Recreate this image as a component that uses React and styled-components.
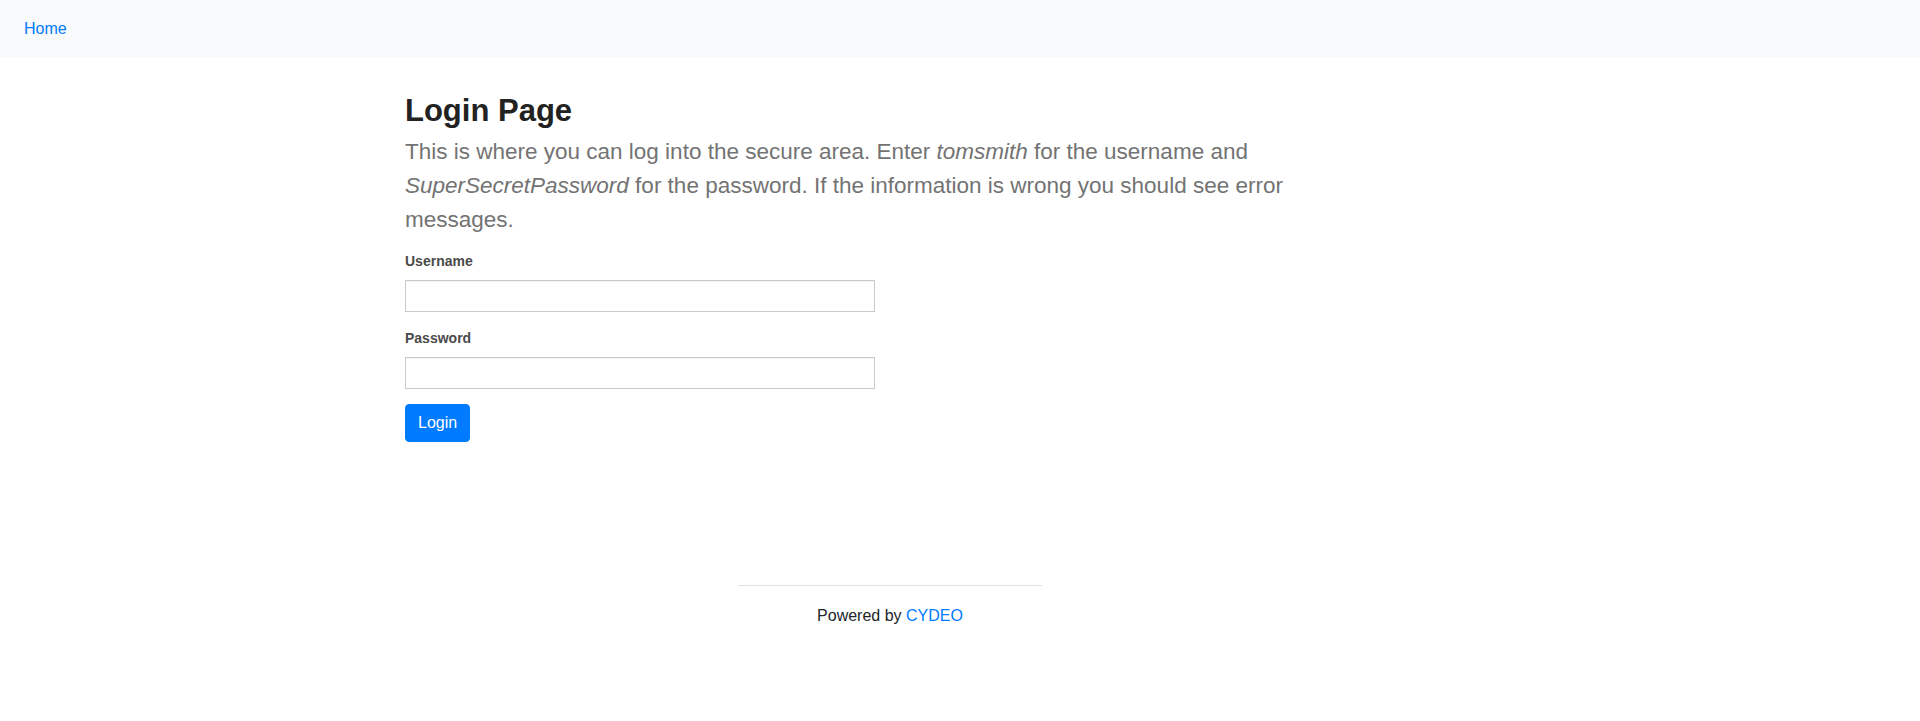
import React from 'react';
import styled, { createGlobalStyle } from 'styled-components';

const GlobalStyle = createGlobalStyle`
  * {
    box-sizing: border-box;
  }

  body {
    margin: 0;
    background: #fff;
    color: #212529;
    font-family: "Liberation Sans", Arial, sans-serif;
    font-size: 16px;
    line-height: 1.5;
  }
`;

const StyledNav = styled.nav`
  display: flex;
  align-items: center;
  height: 57px;
  padding: 0 24px;
  background-color: #f8f9fa;
`;

const NavLink = styled.a`
  color: #007bff;
  font-size: 16px;
  text-decoration: none;
  cursor: pointer;
`;

const StyledContainer = styled.main`
  width: 1140px;
  margin: 0 auto;
  padding: 35px 15px 0;
`;

const StyledColumn = styled.div`
  max-width: 970px;
`;

const StyledTitle = styled.h3`
  margin: 0 0 6px;
  font-size: 31px;
  font-weight: 700;
  line-height: 1.2;
  color: #222;
`;

const StyledLead = styled.p`
  max-width: 935px;
  margin: 0 0 15px;
  font-size: 22.5px;
  font-weight: 300;
  line-height: 33.75px;
  color: #737373;
`;

const StyledForm = styled.form`
  display: flex;
  flex-direction: column;
  align-items: flex-start;
`;

const StyledField = styled.div`
  display: flex;
  flex-direction: column;
  margin-bottom: ${({ last }) => (last ? '15px' : '16px')};
`;

const StyledLabel = styled.label`
  margin-bottom: 8px;
  font-size: 14px;
  font-weight: 700;
  line-height: 21px;
  color: #4a4a4a;
`;

const StyledInput = styled.input`
  width: 470px;
  height: 32px;
  padding: 0 8px;
  border: 1px solid #c9c9c9;
  box-shadow: inset 0 1px 1px rgba(0, 0, 0, 0.05);
  font-family: inherit;
  font-size: 16px;
  outline: none;
`;

const StyledButton = styled.button`
  height: 38px;
  padding: 0 12px;
  border: 1px solid #007bff;
  border-radius: 4px;
  background-color: #007bff;
  color: #fff;
  font-family: inherit;
  font-size: 16px;
  line-height: 24px;
  cursor: pointer;
`;

const StyledFooter = styled.footer`
  margin-top: 143px;
  text-align: center;
`;

const StyledRule = styled.hr`
  width: 304px;
  margin: 0 auto 18px;
  border: 0;
  border-top: 1px solid #e3e3e3;
`;

const StyledCredit = styled.p`
  margin: 0;
  font-size: 16px;
  color: #212529;

  a {
    color: #007bff;
    text-decoration: none;
  }
`;

const App = () => (
  <>
    <GlobalStyle />
    <StyledNav>
      <NavLink>Home</NavLink>
    </StyledNav>
    <StyledContainer>
      <StyledColumn>
        <StyledTitle>Login Page</StyledTitle>
        <StyledLead>
          This is where you can log into the secure area. Enter <em>tomsmith</em> for
          the username and <em>SuperSecretPassword</em> for the password. If the
          information is wrong you should see error messages.
        </StyledLead>
        <StyledForm onSubmit={e => e.preventDefault()}>
          <StyledField>
            <StyledLabel htmlFor="username">Username</StyledLabel>
            <StyledInput id="username" type="text" />
          </StyledField>
          <StyledField last>
            <StyledLabel htmlFor="password">Password</StyledLabel>
            <StyledInput id="password" type="password" />
          </StyledField>
          <StyledButton type="submit">Login</StyledButton>
        </StyledForm>
        <StyledFooter>
          <StyledRule />
          <StyledCredit>
            Powered by <a>CYDEO</a>
          </StyledCredit>
        </StyledFooter>
      </StyledColumn>
    </StyledContainer>
  </>
);

export default App;
